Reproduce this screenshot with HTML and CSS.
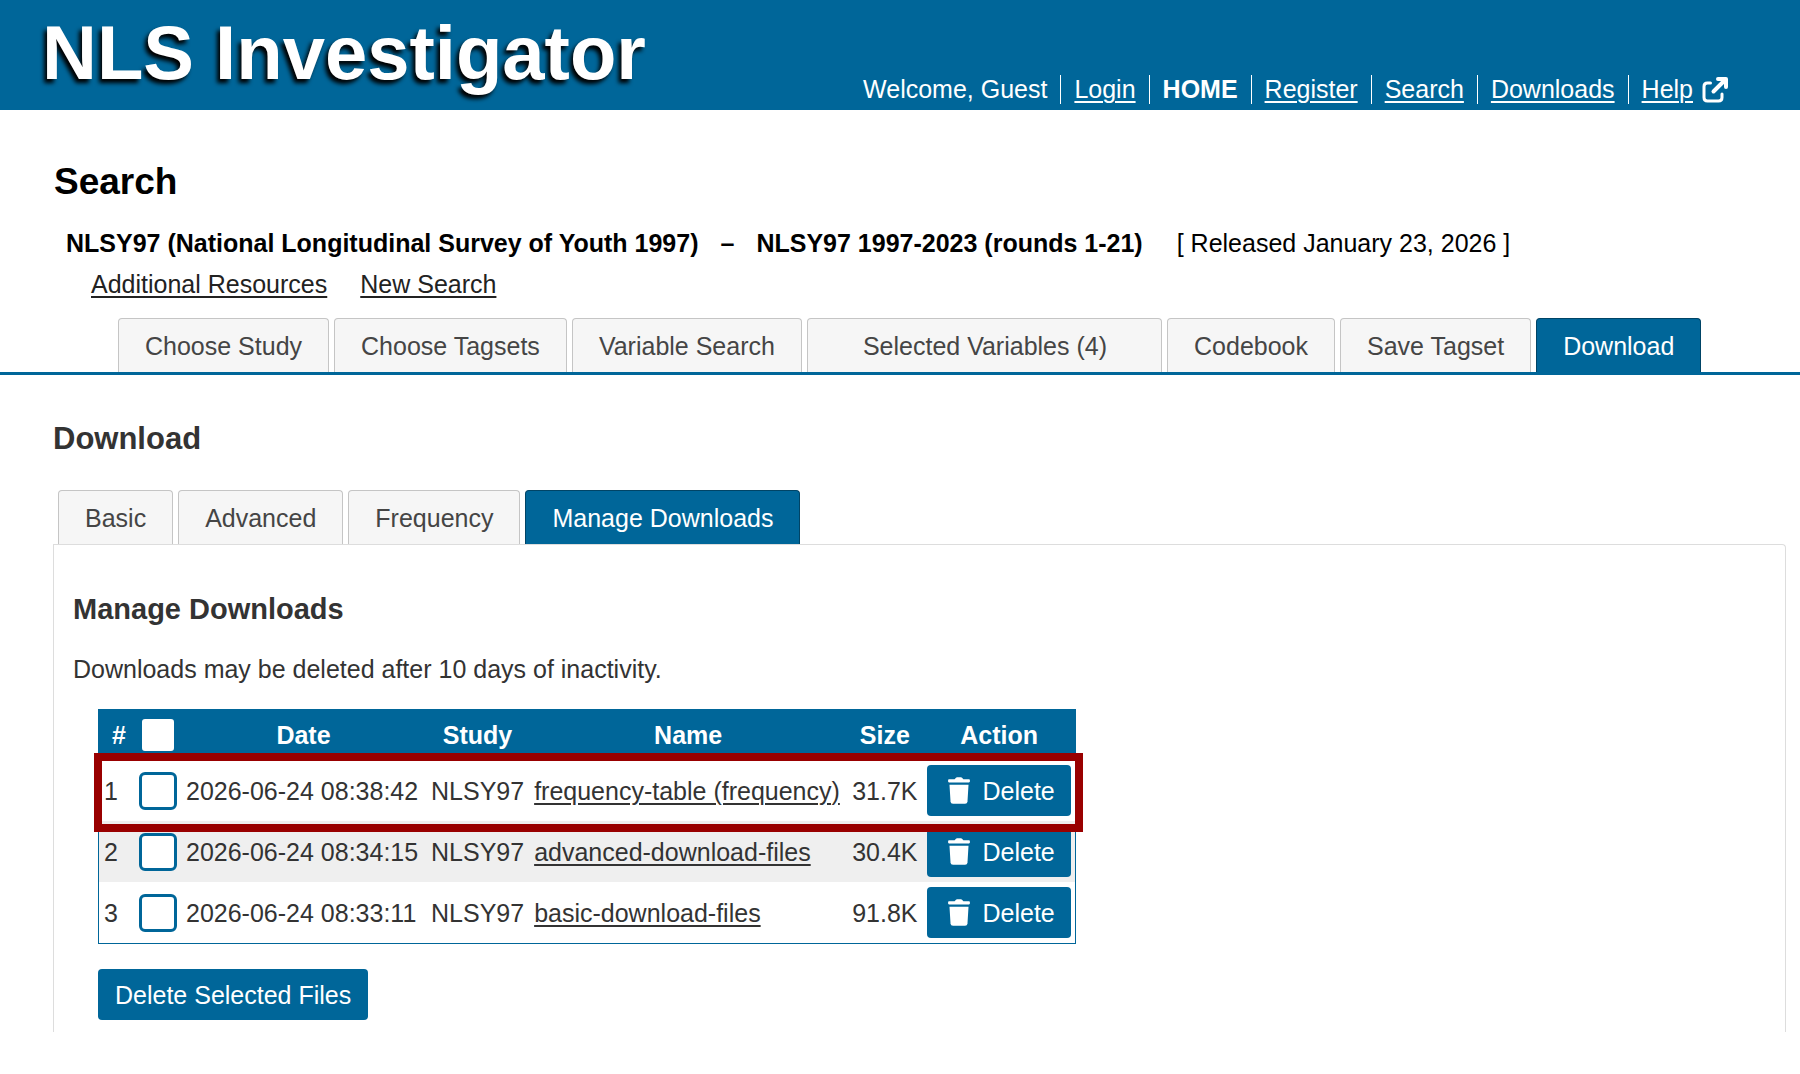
FILE: index.html
```
<!DOCTYPE html>
<html lang="en">
  <head>
    <meta charset="UTF-8" />
    <meta name="viewport" content="width=device-width, initial-scale=1.0" />
    <title>NLS Investigator - Download</title>
    <link rel="stylesheet" href="styles.css">
  </head>
  <body>
    <svg width="0" height="0" class="sprite" aria-hidden="true">
      <symbol id="icon-trash" viewBox="0 0 22 27">
        <path d="M1 2.2h5.6L8 .7Q8.4.2 9 .2h4q.6 0 1 .5l1.400 1.500H21q.9 0 .9 1v1.400q0 .8-.9.8H1q-.9 0-.9-.8V3.200q0-1 .9-1z" />
        <path d="M1.500 7.700h19l-1 16.700q-.2 2.400-2.500 2.400H5q-2.300 0-2.500-2.400z" />
      </symbol>
    </svg>

    <header class="header">
      <div class="logo">NLS Investigator</div>
      <nav class="user-nav">
        <span>Welcome, Guest</span>
        <a href="#">Login</a>
        <a href="#" class="home">HOME</a>
        <a href="#">Register</a>
        <a href="#">Search</a>
        <a href="#">Downloads</a>
        <a href="#">Help</a>
        <svg class="external" viewBox="0 0 26 26" aria-hidden="true">
          <path d="M8.500 6H5.500Q2 6 2 9.500v11Q2 24 5.500 24h11q3.500 0 3.500-3.500v-3.500" />
          <path class="arrow" d="M16 2h8v8M23 3 11.500 14.500" />
        </svg>
      </nav>
    </header>

    <main>
      <h1>Search</h1>
      <div class="study-info">
        <strong>NLSY97 (National Longitudinal Survey of Youth 1997)</strong>
        <strong>–</strong>
        <strong>NLSY97 1997-2023 (rounds 1-21)</strong>
        <span class="released">[ Released January 23, 2026 ]</span>
      </div>
      <div class="study-links">
        <a href="#">Additional Resources</a>
        <a href="#">New Search</a>
      </div>

      <nav class="tabs main-tabs">
        <a href="#">Choose Study</a>
        <a href="#">Choose Tagsets</a>
        <a href="#">Variable Search</a>
        <a href="#" class="wide">Selected Variables (4)</a>
        <a href="#">Codebook</a>
        <a href="#">Save Tagset</a>
        <a href="#" class="active">Download</a>
      </nav>

      <section class="download">
        <h2>Download</h2>
        <nav class="tabs sub-tabs">
          <a href="#">Basic</a>
          <a href="#">Advanced</a>
          <a href="#">Frequency</a>
          <a href="#" class="active">Manage Downloads</a>
        </nav>

        <div class="panel">
          <h3>Manage Downloads</h3>
          <p>Downloads may be deleted after 10 days of inactivity.</p>

          <div class="table-wrap">
            <table>
              <thead>
                <tr>
                  <th class="num">#</th>
                  <th class="check"><input type="checkbox" aria-label="Select all" /></th>
                  <th class="date">Date</th>
                  <th>Study</th>
                  <th class="name">Name</th>
                  <th>Size</th>
                  <th class="action">Action</th>
                </tr>
              </thead>
              <tbody>
                <tr>
                  <td class="num">1</td>
                  <td class="check"><input type="checkbox" aria-label="Select frequency-table" /></td>
                  <td>2026-06-24 08:38:42</td>
                  <td>NLSY97</td>
                  <td><a href="#">frequency-table (frequency)</a></td>
                  <td>31.7K</td>
                  <td class="action"><button class="delete"><svg><use href="#icon-trash" /></svg>Delete</button></td>
                </tr>
                <tr>
                  <td class="num">2</td>
                  <td class="check"><input type="checkbox" aria-label="Select advanced-download-files" /></td>
                  <td>2026-06-24 08:34:15</td>
                  <td>NLSY97</td>
                  <td><a href="#">advanced-download-files</a></td>
                  <td>30.4K</td>
                  <td class="action"><button class="delete"><svg><use href="#icon-trash" /></svg>Delete</button></td>
                </tr>
                <tr>
                  <td class="num">3</td>
                  <td class="check"><input type="checkbox" aria-label="Select basic-download-files" /></td>
                  <td>2026-06-24 08:33:11</td>
                  <td>NLSY97</td>
                  <td><a href="#">basic-download-files</a></td>
                  <td>91.8K</td>
                  <td class="action"><button class="delete"><svg><use href="#icon-trash" /></svg>Delete</button></td>
                </tr>
              </tbody>
            </table>
            <div class="highlight"></div>
          </div>

          <button class="delete-selected">Delete Selected Files</button>
        </div>
      </section>
    </main>
  </body>
</html>
```

FILE: styles.css
```
* {
  box-sizing: border-box;
}
body {
  margin: 0;
  background-color: #fff;
  color: #333;
  font-family: "Liberation Sans", Arial, sans-serif;
  font-size: 25px;
  line-height: 30px;
}
h1,
h2,
h3,
p {
  margin: 0;
}
a {
  color: inherit;
  text-decoration-thickness: 2px;
  text-underline-offset: 3px;
}
.sprite {
  position: absolute;
}

/* header */
.header {
  display: flex;
  justify-content: space-between;
  align-items: flex-end;
  height: 110px;
  padding: 0 72px 6px 42px;
  background-color: #006699;
  color: #fff;
}
.logo {
  font-size: 76px;
  font-weight: bold;
  line-height: 102px;
  text-shadow: -3px 4px 4px #000;
}
.user-nav {
  display: flex;
  align-items: center;
  line-height: 29px;
}
.user-nav a {
  margin-left: 13px;
  padding-left: 13px;
  border-left: 1px solid #fff;
}
.user-nav .home {
  font-weight: bold;
  text-decoration: none;
}
.external {
  width: 26px;
  height: 26px;
  margin-left: 9px;
  fill: none;
  stroke: #fff;
  stroke-width: 3;
  stroke-linecap: round;
  stroke-linejoin: round;
}
.external .arrow {
  stroke-width: 4;
}

/* study heading */
h1 {
  padding: 50px 54px 0;
  color: #000;
  font-size: 37px;
  line-height: 44px;
}
.study-info {
  display: flex;
  gap: 22px;
  margin-top: 24px;
  padding-left: 66px;
  color: #000;
}
.released {
  margin-left: 12px;
}
.study-links {
  display: flex;
  gap: 33px;
  margin-top: 11px;
  padding-left: 91px;
  color: #222;
}

/* tabs */
.tabs {
  display: flex;
  gap: 5px;
}
.tabs a {
  padding: 12px 26px 11px;
  border: 1px solid #c5c5c5;
  border-bottom: none;
  border-radius: 4px 4px 0 0;
  background-color: #f6f6f6;
  color: #454545;
  text-decoration: none;
}
.tabs .wide {
  padding-left: 55px;
  padding-right: 54px;
}
.tabs .active {
  border-color: #004466;
  background-color: #006699;
  color: #fff;
}
.main-tabs {
  margin-top: 19px;
  padding-left: 118px;
  border-bottom: 3px solid #006699;
}

/* download section */
.download {
  padding: 46px 14px 0 53px;
}
h2 {
  font-size: 31px;
  line-height: 36px;
}
.sub-tabs {
  margin-top: 33px;
  padding-left: 5px;
}
.panel {
  padding: 47px 19px 12px;
  border: 1px solid #ddd;
  border-bottom: none;
  border-radius: 0 4px 0 0;
}
h3 {
  font-size: 29px;
  line-height: 34px;
}
.panel p {
  margin-top: 28px;
}

/* downloads table */
.table-wrap {
  position: relative;
  width: fit-content;
  margin: 25px 0 25px 25px;
}
table {
  border: 1px solid #006699;
  border-spacing: 0;
}
th {
  height: 50px;
  background-color: #006699;
  color: #fff;
}
th,
td {
  padding: 0 5px;
  white-space: nowrap;
}
td {
  padding: 5px;
}
tbody tr:nth-child(even) {
  background-color: #efefef;
}
.num {
  width: 40px;
}
.check {
  padding-left: 0;
  padding-right: 4px;
}
.date {
  width: 245px;
}
.name {
  width: 318px;
}
.action {
  padding-right: 4px;
}
input[type="checkbox"] {
  display: block;
  appearance: none;
  width: 38px;
  height: 38px;
  margin: 0;
  border: 3px solid #006699;
  border-radius: 6px;
  background-color: #fff;
}
.highlight {
  position: absolute;
  top: 44px;
  left: -4px;
  right: -7px;
  height: 79px;
  border: 8px solid #990000;
  pointer-events: none;
}
button {
  height: 51px;
  padding: 0 17px;
  border: none;
  border-radius: 4px;
  background-color: #006699;
  color: #fff;
  font: inherit;
  cursor: pointer;
}
.delete {
  display: flex;
  align-items: center;
  gap: 12px;
  padding-left: 21px;
  padding-right: 16px;
}
.delete svg {
  width: 22px;
  height: 27px;
  fill: #fff;
}
.delete-selected {
  display: block;
  margin-left: 25px;
}
```
